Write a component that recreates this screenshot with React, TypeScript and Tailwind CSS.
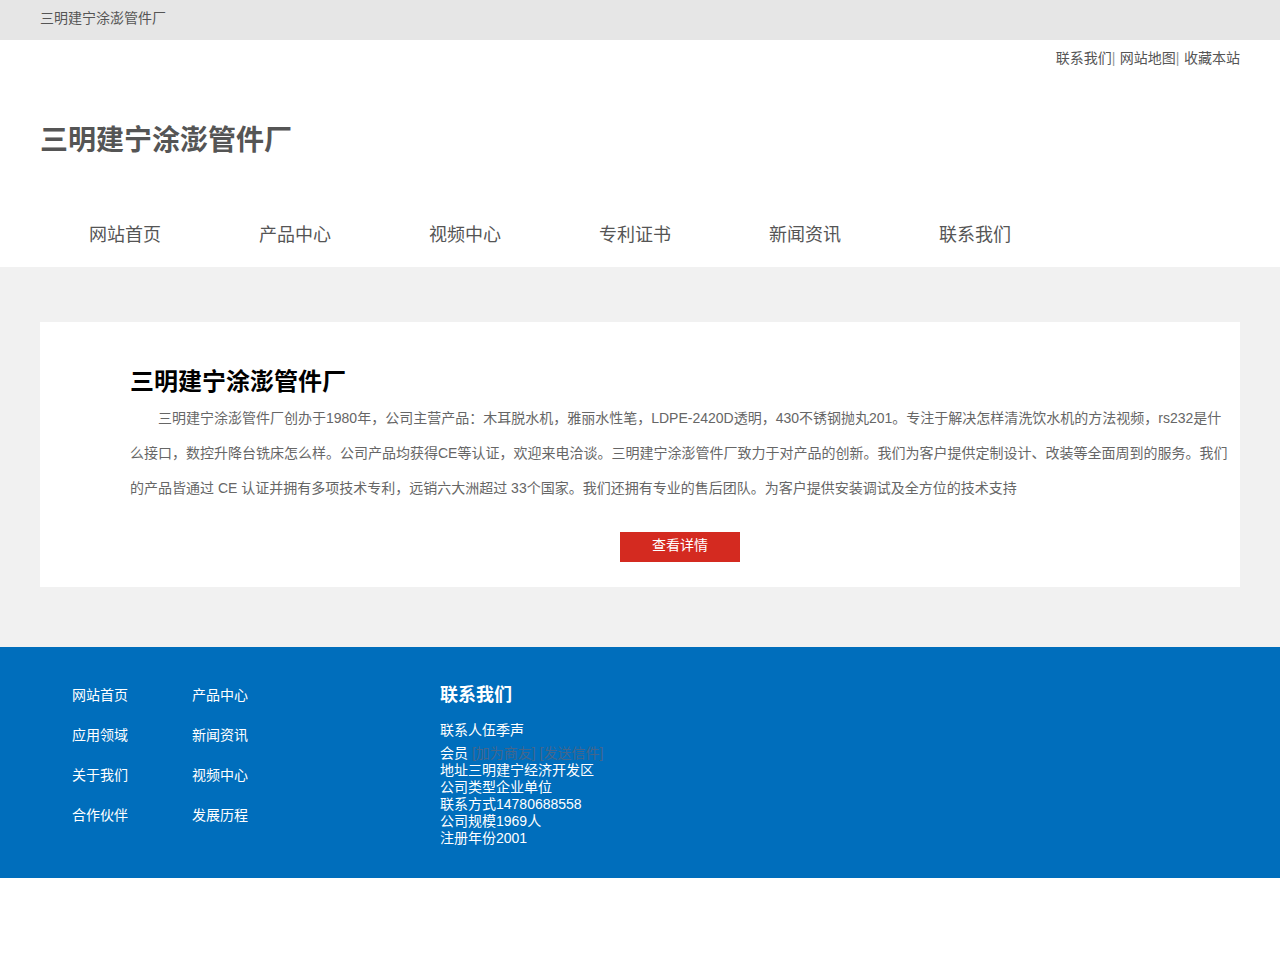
const navItems = ['网站首页', '产品中心', '视频中心', '专利证书', '新闻资讯', '联系我们'];
const footerLinks = [
  ['网站首页', '产品中心'],
  ['应用领域', '新闻资讯'],
  ['关于我们', '视频中心'],
  ['合作伙伴', '发展历程'],
];
const contactLines = ['地址三明建宁经济开发区', '公司类型企业单位', '联系方式14780688558', '公司规模1969人', '注册年份2001'];

export default function App() {
  return (
    <div className="min-h-[960px] bg-white text-[14px] font-['Liberation_Sans','Noto_Sans_CJK_SC',sans-serif] text-[#555]">
      <div className="h-[40px] bg-[#e6e6e6] px-[40px] leading-[37px]">三明建宁涂澎管件厂</div>

      <header className="bg-white px-[40px]">
        <div className="flex h-[37px] items-center justify-end">
          <a>联系我们</a>
          <span className="text-[#999]">|</span>
          <a className="ml-[4.5px]">网站地图</a>
          <span className="text-[#999]">|</span>
          <a className="ml-[4.5px]">收藏本站</a>
        </div>
        <div className="flex h-[123px] items-center pt-[4px]">
          <h1 className="text-[28px] font-bold text-[#555]">三明建宁涂澎管件厂</h1>
        </div>
        <nav className="flex h-[67px]">
          {navItems.map((item) => (
            <a key={item} className="w-[170px] pt-[22px] text-center text-[18px] leading-[26px]">
              {item}
            </a>
          ))}
        </nav>
      </header>

      <main className="bg-[#f1f1f1] px-[40px] pb-[60px] pt-[55px]">
        <section className="h-[265px] bg-white pl-[90px] pr-[12px] pt-[44px]">
          <h2 className="text-[24px] leading-[32px] font-bold text-black">三明建宁涂澎管件厂</h2>
          <p className="mt-[3px] text-[14px] leading-[35px] text-[#666] indent-[28px]">
            三明建宁涂澎管件厂创办于1980年，公司主营产品：木耳脱水机，雅丽水性笔，LDPE-2420D透明，430不锈钢抛丸201。专注于解决怎样清洗饮水机的方法视频，rs232是什么接口，数控升降台铣床怎么样。公司产品均获得CE等认证，欢迎来电洽谈。三明建宁涂澎管件厂致力于对产品的创新。我们为客户提供定制设计、改装等全面周到的服务。我们的产品皆通过 CE 认证并拥有多项技术专利，远销六大洲超过 33个国家。我们还拥有专业的售后团队。为客户提供安装调试及全方位的技术支持
          </p>
          <div className="ml-[490px] mt-[26px] h-[30px] w-[120px] bg-[#d42a20] text-center leading-[27px] text-white">查看详情</div>
        </section>
      </main>

      <footer className="flex h-[231px] bg-[#006ebc] text-white">
        <div className="ml-[72px] w-[368px] pt-[28px]">
          {footerLinks.map(([left, right]) => (
            <div key={left} className="flex h-[40px] leading-[40px]">
              <a className="w-[120px]">{left}</a>
              <a>{right}</a>
            </div>
          ))}
        </div>
        <div className="pt-[35px]">
          <h3 className="text-[18px] leading-[26px] font-bold">联系我们</h3>
          <p className="mt-[12px] leading-[20px]">联系人伍季声</p>
          <div className="mt-[5px] leading-[17px]">
            <p>
              会员 <span className="text-[#44668c]">[加为商友] [发送信件]</span>
            </p>
            {contactLines.map((line) => (
              <p key={line}>{line}</p>
            ))}
          </div>
        </div>
      </footer>
    </div>
  );
}
